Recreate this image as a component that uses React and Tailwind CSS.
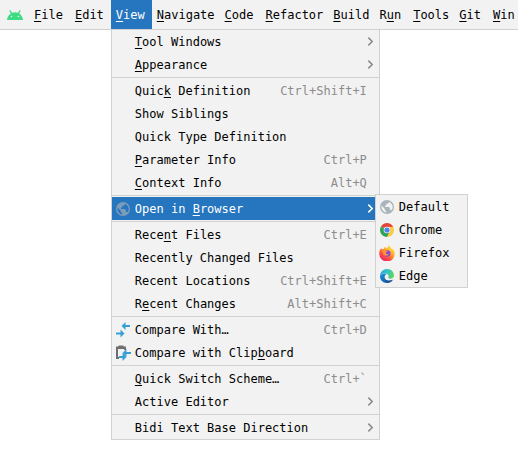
import React from 'react';

function AndroidIcon() {
  return (
    <svg viewBox="0 0 16 10" className="h-[10px] w-4" aria-hidden="true">
      <path d="M0 10C.2 7 1.700 4.800 3.800 3.400L2.300.7 3.300.1 5 2.800A8.500 8.500 0 0 1 11 2.800L12.700.1l1 .6L12.200 3.400C14.300 4.800 15.800 7 16 10z" fill="#3ddc84" />
      <circle cx="4.500" cy="6.500" r=".8" fill="#f2f2f2" />
      <circle cx="11.500" cy="6.500" r=".8" fill="#f2f2f2" />
    </svg>
  );
}

function GlobeIcon({ dim }) {
  return (
    <svg viewBox="0 0 16 16" className="size-4" aria-hidden="true">
      <path
        fillRule="evenodd"
        fill={dim ? '#7c9db9' : '#a9b4bb'}
        d="M8 1a7 7 0 1 1 0 14A7 7 0 0 1 8 1zM2.600 6.600A5.600 5.600 0 0 0 7.200 13.500V12.200L5.800 10.900V10.100zM10 2.800V3.500L8.700 4.800H7.300V6.200L6.100 6.700V8H10L10.800 8.800V10.700H12L12.700 11.200A5.700 5.700 0 0 0 10 2.800z"
      />
    </svg>
  );
}

function ChromeIcon() {
  return (
    <svg viewBox="0 0 16 16" className="size-4" aria-hidden="true">
      <path d="M8 8 1.940 4.500A7 7 0 0 1 14.060 4.500z" fill="#e0483b" />
      <path d="M8 8 1.940 4.500A7 7 0 0 0 8 15L11 9.700z" fill="#2fa355" />
      <path d="M8 4.800H14.200A7 7 0 0 1 8 15L11 9.500z" fill="#fcca3f" />
      <path d="M8 4.800H14.200L14 4.400 8 4z" fill="#e0483b" />
      <circle cx="8" cy="8" r="3.300" fill="#f5f7fb" />
      <circle cx="8" cy="8" r="2.600" fill="#4a86ee" />
    </svg>
  );
}

function FirefoxIcon() {
  return (
    <svg viewBox="0 0 16 16" className="size-4" aria-hidden="true">
      <defs>
        <linearGradient id="fox-body" x1="0.850" y1="0.050" x2="0.200" y2="0.950">
          <stop offset="0" stopColor="#fff04a" />
          <stop offset=".35" stopColor="#ffb02e" />
          <stop offset=".65" stopColor="#ff5a36" />
          <stop offset="1" stopColor="#ee1c72" />
        </linearGradient>
      </defs>
      <path
        d="M9.600.2C11.300 1.300 11.900 2.600 12.400 3.700L13.200 3.400C15 5 15.900 6.900 15.700 9A7.700 7.700 0 0 1 .3 8.600C.2 6.400.9 4.500 2.200 2.900L2.600 4.300C3.400 3.900 4 3.900 4.800 4 5.100 2.900 5.700 2.200 6.500 1.800L6.900 3.400C8.300 2.800 9.300 1.700 9.600.2z"
        fill="url(#fox-body)"
      />
      <circle cx="8.200" cy="8.500" r="3.300" fill="#8748d8" />
      <path d="M3.200 5.600C4.600 4.700 6 4.800 7.100 5.600L8.800 5.800C8.700 6.700 7.400 7 6.900 7.400 6.900 8.900 8.500 9.600 10 8.800 9 11 6 11.300 4.600 9.700z" fill="#ff9136" />
    </svg>
  );
}

function EdgeIcon() {
  return (
    <svg viewBox="0 0 16 16" className="size-4" aria-hidden="true">
      <defs>
        <linearGradient id="edge-top" x1="0" y1="0.300" x2="1" y2="0.500">
          <stop offset="0" stopColor="#2aa5dc" />
          <stop offset=".5" stopColor="#2fc3c4" />
          <stop offset="1" stopColor="#62d957" />
        </linearGradient>
        <linearGradient id="edge-side" x1="0" y1="0" x2="0.300" y2="1">
          <stop offset="0" stopColor="#1b8fdc" />
          <stop offset="1" stopColor="#1267b4" />
        </linearGradient>
      </defs>
      <path d="M1 8C1.200 3.900 4.200 1 8 1 12.200 1 15 4 15 7.200 15 9.300 13.400 10.700 11.500 10.700 10 10.700 8.900 10.200 9 9.600 9.700 9 9.900 8.200 9.500 7.400 8 4.500 3.200 4.400 1 8z" fill="url(#edge-top)" />
      <path d="M1 8C2 5.700 5.500 4.700 7.900 6 6.200 6.500 5.200 8.300 5.600 10.300 6.100 12.700 8 14.200 9.900 14.700 5 16.200.8 12.600 1 8z" fill="url(#edge-side)" />
      <path d="M5.700 8.700C5.300 12 8.700 13.600 13.900 11.700 13 13.400 11.500 14.600 9.700 14.800 7 14.600 4.600 11.700 5.700 8.700z" fill="#174c93" />
    </svg>
  );
}

function CompareIcon() {
  return (
    <svg viewBox="0 0 16 16" className="size-4" fill="#389fd6" aria-hidden="true">
      <path d="M6.500 4l4-4v3H15v2h-4.500v3z" />
      <path d="M9.500 11.500l-4-4v3H1v2h4.500v3z" />
    </svg>
  );
}

function CompareClipboardIcon() {
  return (
    <svg viewBox="0 0 16 16" className="size-4" aria-hidden="true">
      <path d="M1 1.500H3.500V.5H8.500V1.500H11V5H9V4H3V12H4V14H1z" fill="#6e6e6e" />
      <path d="M7.500 8l4-4v3H16v2h-4.500v3z" fill="#389fd6" />
      <path d="M11.500 12l-4-4v3H4v2h3.500v3z" fill="#389fd6" />
    </svg>
  );
}

function Arrow({ active }) {
  return (
    <svg viewBox="0 0 7 9" className="h-[9px] w-[7px]" fill="none" stroke={active ? '#ffffff' : '#8a8a8a'} strokeWidth="1.500" aria-hidden="true">
      <path d="M1.300.6 5.200 4.500 1.300 8.400" />
    </svg>
  );
}

// An ampersand in a label marks the letter that follows it as the mnemonic.
function Label({ text }) {
  const at = text.indexOf('&');
  if (at < 0) return <span>{text}</span>;
  return (
    <span>
      {text.slice(0, at)}
      <u className="decoration-1 underline-offset-2">{text[at + 1]}</u>
      {text.slice(at + 2)}
    </span>
  );
}

const groups = [
  [
    { label: '&Tool Windows', more: true },
    { label: '&Appearance', more: true },
  ],
  [
    { label: 'Quic&k Definition', keys: 'Ctrl+Shift+I' },
    { label: 'Show Siblings' },
    { label: 'Quick Type Definition' },
    { label: '&Parameter Info', keys: 'Ctrl+P' },
    { label: '&Context Info', keys: 'Alt+Q' },
  ],
  [{ label: 'Open in &Browser', more: true, icon: <GlobeIcon dim />, open: true }],
  [
    { label: 'Rece&nt Files', keys: 'Ctrl+E' },
    { label: 'Recently Changed Files' },
    { label: 'Recent Locations', keys: 'Ctrl+Shift+E' },
    { label: 'R&ecent Changes', keys: 'Alt+Shift+C' },
  ],
  [
    { label: 'Compare With…', keys: 'Ctrl+D', icon: <CompareIcon /> },
    { label: 'Compare with Clip&board', icon: <CompareClipboardIcon /> },
  ],
  [
    { label: '&Quick Switch Scheme…', keys: 'Ctrl+`' },
    { label: 'Active Editor', more: true },
  ],
  [{ label: 'Bidi Text Base Direction', more: true }],
];

const browsers = [
  { label: 'Default', icon: <GlobeIcon /> },
  { label: 'Chrome', icon: <ChromeIcon /> },
  { label: 'Firefox', icon: <FirefoxIcon /> },
  { label: 'Edge', icon: <EdgeIcon /> },
];

const menus = ['&File', '&Edit', '&View', '&Navigate', '&Code', '&Refactor', '&Build', 'R&un', '&Tools', '&Git', '&Win'];

function BrowserMenu() {
  return (
    <ul role="menu" className="absolute -top-[3px] left-[263px] z-10 w-[93px] border border-[#d1d1d1] bg-[#f2f2f2] text-black">
      {browsers.map((b) => (
        <li key={b.label} role="none">
          <button role="menuitem" className="flex h-[23px] w-full items-center gap-1 pl-[3px]">
            {b.icon}
            <span>{b.label}</span>
          </button>
        </li>
      ))}
    </ul>
  );
}

function MenuRow({ item }) {
  return (
    <li role="none" className="relative">
      <button
        role="menuitem"
        className={`flex h-[23px] w-full items-center gap-1 pl-[3px] ${item.more ? 'pr-[5px]' : 'pr-3'} ${item.open ? 'bg-[#2675bf] text-white' : ''}`}
      >
        <span className="w-4 shrink-0">{item.icon}</span>
        <Label text={item.label} />
        {item.keys && <span className="ml-auto text-[#8c8c8c]">{item.keys}</span>}
        {item.more && (
          <span className="ml-auto">
            <Arrow active={item.open} />
          </span>
        )}
      </button>
      {item.open && <BrowserMenu />}
    </li>
  );
}

function ViewMenu() {
  return (
    <div role="menu" className="absolute top-full left-0 z-10 w-[269px] border border-[#d1d1d1] bg-[#f2f2f2]">
      {groups.map((items, i) => (
        <React.Fragment key={i}>
          {i > 0 && <hr className="my-px border-[#d1d1d1]" />}
          <ul role="none">
            {items.map((item) => (
              <MenuRow key={item.label} item={item} />
            ))}
          </ul>
        </React.Fragment>
      ))}
    </div>
  );
}

export default function App() {
  return (
    <div className="min-h-screen overflow-hidden bg-white font-['DejaVu_Sans_Mono',monospace] text-[12px] leading-4 whitespace-nowrap text-black">
      <nav className="flex h-[30px] border-b border-[#d1d1d1] bg-[#f2f2f2] pl-[7px]">
        <span className="mr-[6px] flex shrink-0 items-center">
          <AndroidIcon />
        </span>
        {menus.map((m) => (
          <div key={m} className="relative shrink-0">
            <button
              className={`flex h-[29px] items-center pl-[5px] ${m.length > 5 ? 'pr-[5px]' : m === '&Win' ? '' : 'pr-[7px]'} ${m === '&View' ? 'bg-[#2675bf] text-white' : ''}`}
            >
              <Label text={m} />
            </button>
            {m === '&View' && <ViewMenu />}
          </div>
        ))}
      </nav>
    </div>
  );
}
